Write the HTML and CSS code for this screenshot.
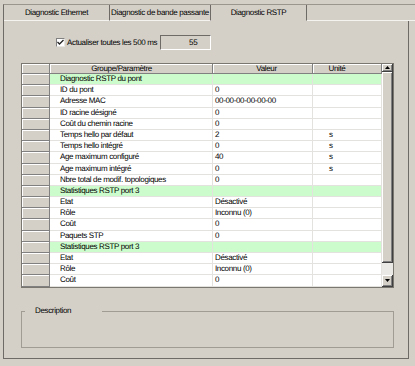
FILE: index.html
```html
<!DOCTYPE html>
<html lang="fr">
<head>
  <meta charset="UTF-8">
  <meta name="viewport" content="width=device-width, initial-scale=1.0">
  <title>Diagnostic RSTP</title>
  <link rel="stylesheet" href="styles.css">
</head>
<body>
  <div class="frame">
    <!-- Onglets -->
    <div class="tabs">
      <div class="tab tab-eth">Diagnostic Ethernet</div>
      <div class="tab tab-bp">Diagnostic de bande passante</div>
      <div class="tab tab-rstp active">Diagnostic RSTP</div>
      <div class="tab-fill"></div>
    </div>

    <div class="panel">
      <!-- Rafraichissement -->
      <div class="refresh">
        <span class="check">
          <svg width="7" height="7" viewBox="0 0 7 7"><polyline points="0.5,3 2.5,5 6.5,1" fill="none" stroke="#222" stroke-width="1.3"/></svg>
        </span>
        <span class="refresh-label">Actualiser toutes les 500 ms</span>
        <span class="counter">55</span>
      </div>

      <!-- Tableau -->
      <div class="grid-wrap">
        <div class="grid">
          <div class="row head"><span class="rh"></span><span class="c1">Groupe/Paramètre</span><span class="c2">Valeur</span><span class="c3">Unité</span></div>
          <div class="row group"><span class="rh"></span><span class="c1">Diagnostic RSTP du pont</span><span class="c2"></span><span class="c3"></span></div>
          <div class="row"><span class="rh"></span><span class="c1">ID du pont</span><span class="c2">0</span><span class="c3"></span></div>
          <div class="row"><span class="rh"></span><span class="c1">Adresse MAC</span><span class="c2">00-00-00-00-00-00</span><span class="c3"></span></div>
          <div class="row"><span class="rh"></span><span class="c1">ID racine désigné</span><span class="c2">0</span><span class="c3"></span></div>
          <div class="row"><span class="rh"></span><span class="c1">Coût du chemin racine</span><span class="c2">0</span><span class="c3"></span></div>
          <div class="row"><span class="rh"></span><span class="c1">Temps hello par défaut</span><span class="c2">2</span><span class="c3">s</span></div>
          <div class="row"><span class="rh"></span><span class="c1">Temps hello intégré</span><span class="c2">0</span><span class="c3">s</span></div>
          <div class="row"><span class="rh"></span><span class="c1">Age maximum configuré</span><span class="c2">40</span><span class="c3">s</span></div>
          <div class="row"><span class="rh"></span><span class="c1">Age maximum intégré</span><span class="c2">0</span><span class="c3">s</span></div>
          <div class="row"><span class="rh"></span><span class="c1">Nbre total de modif. topologiques</span><span class="c2">0</span><span class="c3"></span></div>
          <div class="row group"><span class="rh"></span><span class="c1">Statistiques RSTP port 3</span><span class="c2"></span><span class="c3"></span></div>
          <div class="row"><span class="rh"></span><span class="c1">Etat</span><span class="c2">Désactivé</span><span class="c3"></span></div>
          <div class="row"><span class="rh"></span><span class="c1">Rôle</span><span class="c2">Inconnu (0)</span><span class="c3"></span></div>
          <div class="row"><span class="rh"></span><span class="c1">Coût</span><span class="c2">0</span><span class="c3"></span></div>
          <div class="row"><span class="rh"></span><span class="c1">Paquets STP</span><span class="c2">0</span><span class="c3"></span></div>
          <div class="row group"><span class="rh"></span><span class="c1">Statistiques RSTP port 3</span><span class="c2"></span><span class="c3"></span></div>
          <div class="row"><span class="rh"></span><span class="c1">Etat</span><span class="c2">Désactivé</span><span class="c3"></span></div>
          <div class="row"><span class="rh"></span><span class="c1">Rôle</span><span class="c2">Inconnu (0)</span><span class="c3"></span></div>
          <div class="row"><span class="rh"></span><span class="c1">Coût</span><span class="c2">0</span><span class="c3"></span></div>
        </div>

        <div class="scrollbar">
          <div class="sb-btn sb-up">
            <svg width="5" height="3" viewBox="0 0 5 3"><polygon points="2.5,0 5,3 0,3" fill="#000"/></svg>
          </div>
          <div class="sb-thumb"></div>
          <div class="sb-track"></div>
          <div class="sb-btn sb-down">
            <svg width="5" height="3" viewBox="0 0 5 3"><polygon points="0,0 5,0 2.5,3" fill="#000"/></svg>
          </div>
        </div>
      </div>

      <!-- Description -->
      <fieldset class="desc">
        <legend>Description</legend>
      </fieldset>
    </div>
  </div>
</body>
</html>
```

FILE: styles.css
```css
/* General Reset */
* {
  box-sizing: border-box;
}

body {
  margin: 0;
  width: 415px;
  height: 366px;
  overflow: hidden;
  background: #d4d0c8;
  color: #000;
  font-family: "Liberation Sans", Arial, sans-serif;
  font-size: 8px;
  letter-spacing: -0.35px;
  text-rendering: geometricPrecision;
}

/* Frame + tabs */
.frame {
  margin: 4px 0 0 3px;
  border-top: 1px solid #9a968e;
  border-left: 1px solid #6e6b66;
}

.tabs {
  display: flex;
  height: 16px;
}

.tab {
  height: 16px;
  line-height: 16px;
  text-align: center;
  white-space: nowrap;
  border-right: 1px solid #6e6b66;
  border-bottom: 1px solid #f4f3f0;
}

.tab-eth {
  width: 106px;
}

.tab-bp {
  width: 101px;
}

.tab-rstp {
  width: 96px;
}

.tab.active {
  border-bottom-color: #d4d0c8;
}

.tab-fill {
  flex: 1;
  border-bottom: 1px solid #f4f3f0;
}

/* Panel */
.panel {
  width: 405px;
  height: 338px;
  padding: 14px 0 0 17px;
  border-right: 1px solid #6e6b66;
  border-bottom: 1px solid #6e6b66;
}

.refresh {
  display: flex;
  align-items: center;
  height: 15px;
  padding-left: 35px;
}

.check {
  display: flex;
  align-items: center;
  justify-content: center;
  width: 9px;
  height: 9px;
  background: #fff;
  border-top: 1px solid #808080;
  border-left: 1px solid #808080;
  border-right: 1px solid #e8e6e2;
  border-bottom: 1px solid #e8e6e2;
}

.refresh-label {
  margin-left: 2px;
  white-space: nowrap;
}

.counter {
  width: 51px;
  height: 15px;
  margin-left: 3px;
  padding-right: 13px;
  line-height: 13px;
  text-align: right;
  border-top: 1px solid #6e6b66;
  border-left: 1px solid #6e6b66;
  border-right: 1px solid #fff;
  border-bottom: 1px solid #fff;
}

/* Table */
.grid-wrap {
  display: flex;
  width: 373px;
  margin-top: 13px;
  border: 1px solid #7a7770;
  background: #fff;
}

.grid {
  width: 360px;
}

.row {
  display: flex;
  height: 11.2px;
  line-height: 10.6px;
}

.row span {
  height: 100%;
  white-space: nowrap;
  overflow: hidden;
  border-right: 1px solid #e4e2de;
  border-bottom: 1px solid #e4e2de;
}

.row .rh {
  width: 28px;
  background: #d4d0c8;
  border-right-color: #808080;
  border-bottom-color: #808080;
  box-shadow: inset 1px 1px 0 #fff;
}

.c1 {
  width: 163px;
  padding-left: 10px;
}

.c2 {
  width: 100px;
  padding-left: 2px;
}

.c3 {
  width: 69px;
  padding-left: 16px;
}

.row.group .c1,
.row.group .c2,
.row.group .c3 {
  background: #ccfccc;
}

.row.head {
  height: 10px;
  line-height: 9.5px;
}

.row.head span {
  text-align: center;
  background: #d4d0c8;
  border-right-color: #808080;
  border-bottom-color: #808080;
  box-shadow: inset 1px 1px 0 #fff;
}

.row.head .c1 {
  padding: 0 19px 0 0;
}

.row.head .c2 {
  padding: 0 0 0 8px;
}

.row.head .c3 {
  padding: 0 20px 0 0;
}

/* Scrollbar */
.scrollbar {
  display: flex;
  flex-direction: column;
  width: 11px;
  background: #d4d0c8;
}

.sb-btn,
.sb-thumb {
  display: flex;
  align-items: center;
  justify-content: center;
  background: #d4d0c8;
  border-right: 1px solid #404040;
  border-bottom: 1px solid #404040;
  box-shadow: inset 1px 1px 0 #fff, inset -1px -1px 0 #808080;
}

.sb-up {
  height: 8px;
}

.sb-thumb {
  height: 191px;
}

.sb-track {
  height: 12px;
  background: #ebe9e5;
}

.sb-down {
  height: 12px;
}

/* Description */
.desc {
  width: 373px;
  height: 42px;
  margin: 18px 0 0;
  padding: 0;
  border: 1px solid #a09c94;
}

.desc legend {
  margin-left: 3px;
  padding: 0 31px 0 10px;
  line-height: 10px;
}
```
